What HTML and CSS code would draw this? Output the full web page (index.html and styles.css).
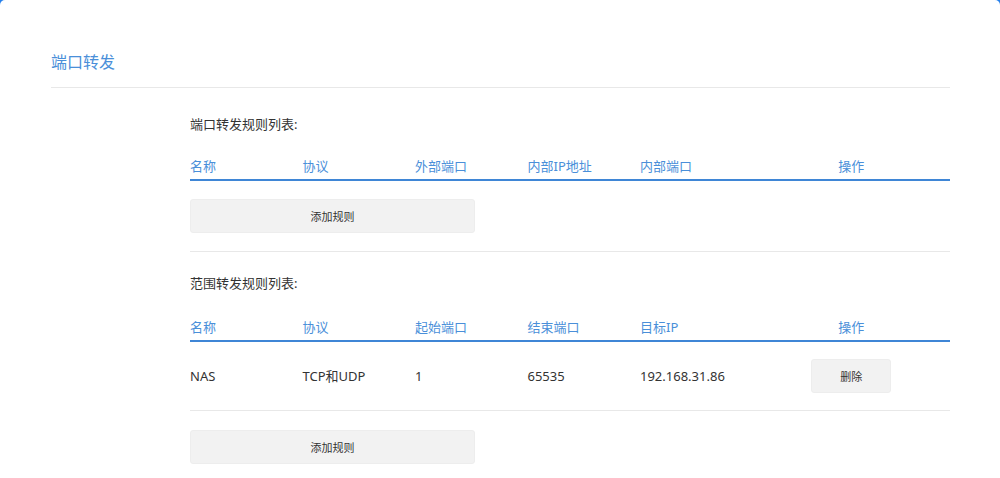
FILE: index.html
```html
<!DOCTYPE html>
<html lang="zh-CN">
<head>
  <meta charset="UTF-8" />
  <meta name="viewport" content="width=device-width, initial-scale=1.0"/>
  <title>端口转发</title>
  <link rel="stylesheet" href="styles.css">
</head>
<body>
  <div class="page">
    <h1 class="page-title">端口转发</h1>

    <div class="content">
      <div class="section">
        <p class="section-title">端口转发规则列表:</p>
        <div class="rule-table">
          <div class="row head">
            <span>名称</span>
            <span>协议</span>
            <span>外部端口</span>
            <span>内部IP地址</span>
            <span>内部端口</span>
            <span class="op">操作</span>
          </div>
        </div>
        <button class="add-btn">添加规则</button>
      </div>

      <div class="section">
        <p class="section-title">范围转发规则列表:</p>
        <div class="rule-table">
          <div class="row head">
            <span>名称</span>
            <span>协议</span>
            <span>起始端口</span>
            <span>结束端口</span>
            <span>目标IP</span>
            <span class="op">操作</span>
          </div>
          <div class="row item">
            <span>NAS</span>
            <span>TCP和UDP</span>
            <span>1</span>
            <span>65535</span>
            <span>192.168.31.86</span>
            <span class="op"><button class="del-btn">删除</button></span>
          </div>
        </div>
        <button class="add-btn">添加规则</button>
      </div>
    </div>
  </div>
</body>
</html>
```

FILE: styles.css
```css
:root {
  --blue: #4a8fd9;
  --line-blue: #3f86d6;
  --text: #333;
  --btn-bg: #f2f2f2;
  --sep: #e8e8e8;
}

body {
  margin: 0;
  background-color: #2680eb;
  font-family: "Noto Sans", "Noto Sans CJK SC", sans-serif;
  color: var(--text);
}

.page {
  background: #fff;
  border-radius: 5px 5px 0 0;
  min-height: 100vh;
  padding: 1px 50px 0 51px;
  box-sizing: border-box;
}

.page-title {
  margin: 49px 0 0;
  padding-bottom: 13px;
  font-size: 16px;
  line-height: 24px;
  font-weight: normal;
  color: var(--blue);
  border-bottom: 1px solid var(--sep);
}

.content {
  padding-left: 139px;
}

.section {
  padding: 26px 0 18px;
  border-bottom: 1px solid var(--sep);
}

.section:last-child {
  border-bottom: none;
  padding-top: 21px;
}

.section-title {
  margin: 0;
  font-size: 13px;
  line-height: 20px;
}

.rule-table {
  margin-top: 16px;
}

.section:last-child .rule-table {
  margin-top: 18px;
}

.row {
  display: grid;
  grid-template-columns: 112.5px 112.5px 112.5px 112.5px 112.5px 1fr;
  align-items: center;
  font-size: 13px;
  line-height: 20px;
}

.row.head {
  color: var(--blue);
  padding: 6px 0 3px;
  border-bottom: 2px solid var(--line-blue);
}

.row.item {
  padding: 17px 0;
  border-bottom: 1px solid var(--sep);
}

.row .op {
  text-align: center;
}

button {
  font-family: inherit;
  font-size: 11px;
  color: var(--text);
  background: var(--btn-bg);
  border: 1px solid #ededed;
  border-radius: 3px;
  cursor: pointer;
}

.add-btn {
  display: block;
  width: 285px;
  height: 34px;
  margin-top: 18px;
}

.section:last-child .add-btn {
  margin-top: 19px;
}

.del-btn {
  width: 80px;
  height: 34px;
}
```
